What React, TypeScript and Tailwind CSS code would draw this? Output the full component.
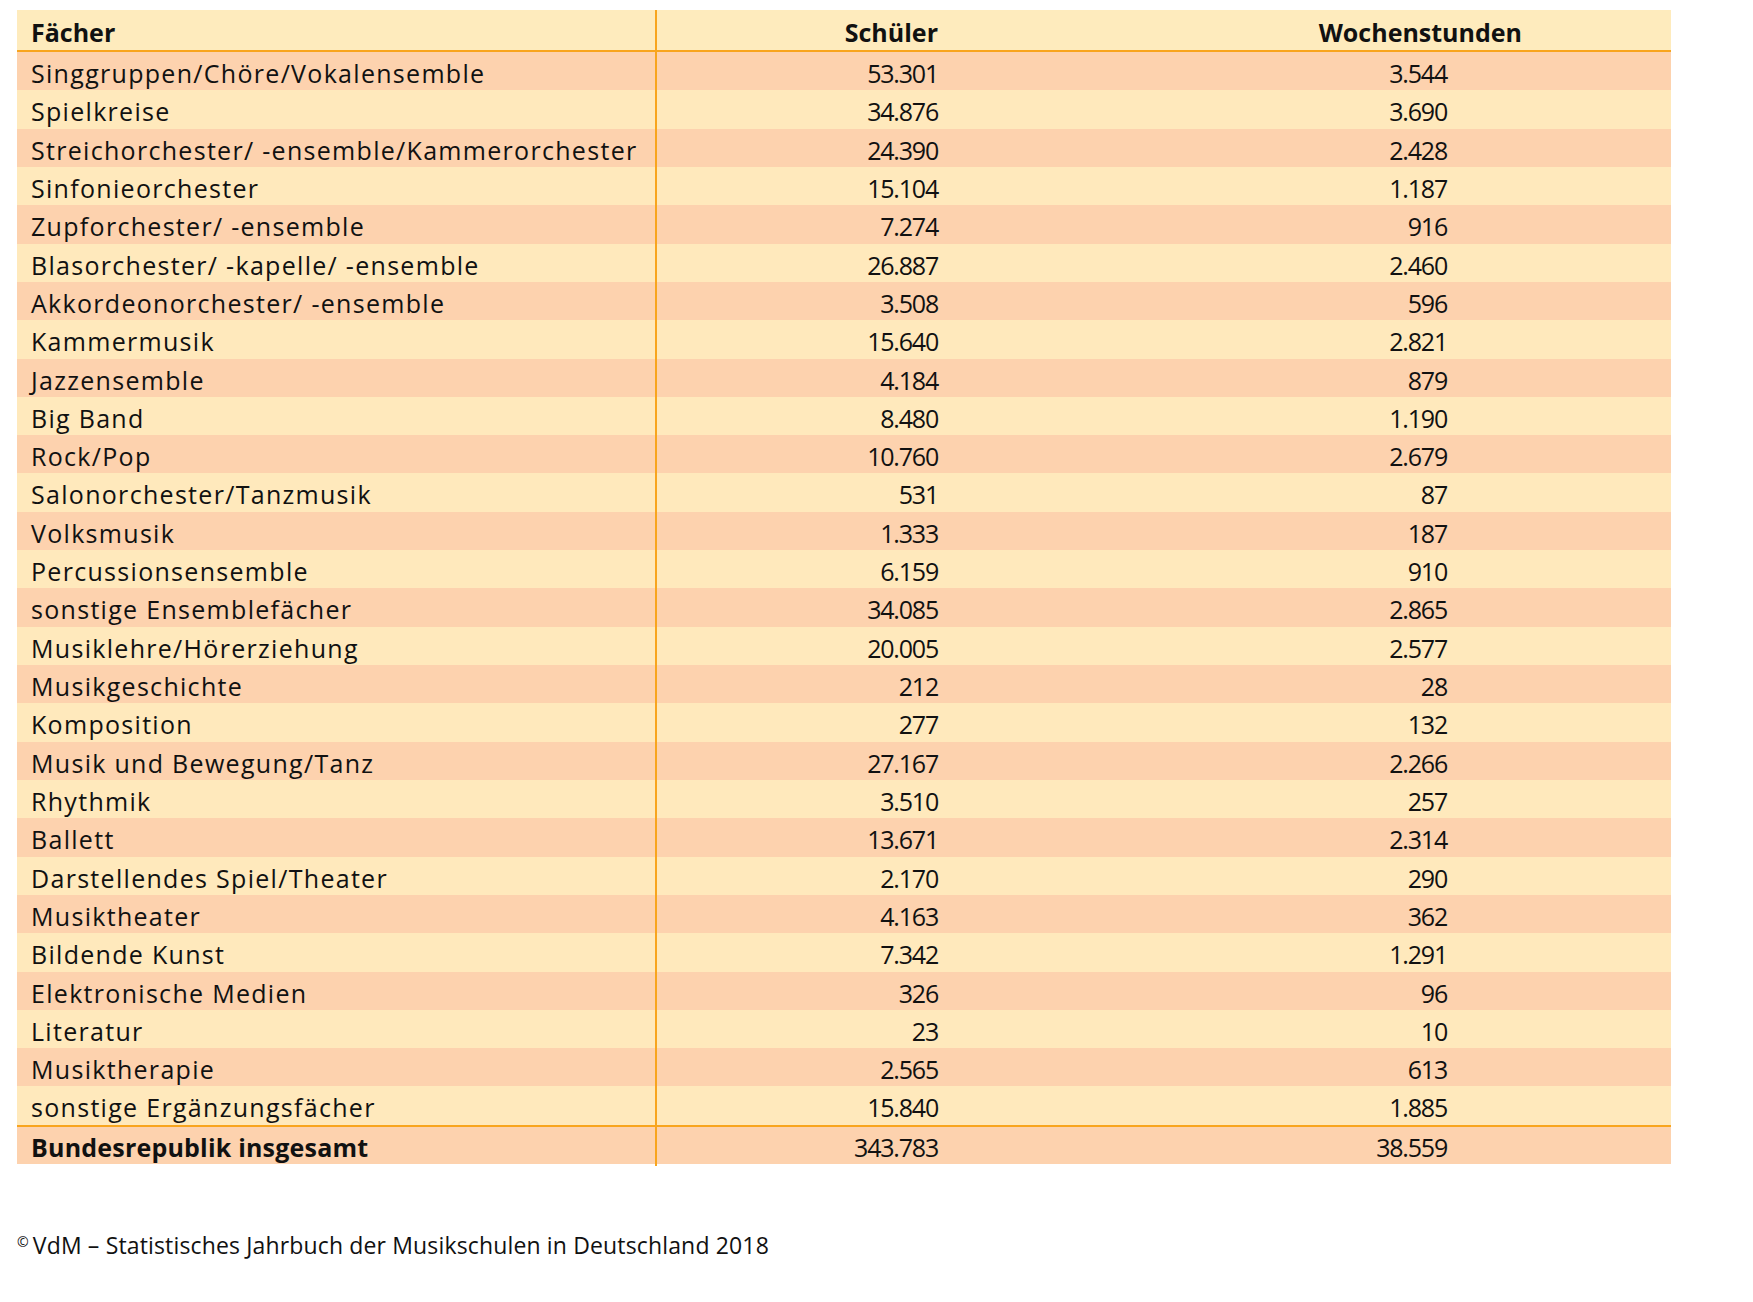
const rows: [string, string, string][] = [
  ["Singgruppen/Chöre/Vokalensemble", "53.301", "3.544"],
  ["Spielkreise", "34.876", "3.690"],
  ["Streichorchester/ -ensemble/Kammerorchester", "24.390", "2.428"],
  ["Sinfonieorchester", "15.104", "1.187"],
  ["Zupforchester/ -ensemble", "7.274", "916"],
  ["Blasorchester/ -kapelle/ -ensemble", "26.887", "2.460"],
  ["Akkordeonorchester/ -ensemble", "3.508", "596"],
  ["Kammermusik", "15.640", "2.821"],
  ["Jazzensemble", "4.184", "879"],
  ["Big Band", "8.480", "1.190"],
  ["Rock/Pop", "10.760", "2.679"],
  ["Salonorchester/Tanzmusik", "531", "87"],
  ["Volksmusik", "1.333", "187"],
  ["Percussionsensemble", "6.159", "910"],
  ["sonstige Ensemblefächer", "34.085", "2.865"],
  ["Musiklehre/Hörerziehung", "20.005", "2.577"],
  ["Musikgeschichte", "212", "28"],
  ["Komposition", "277", "132"],
  ["Musik und Bewegung/Tanz", "27.167", "2.266"],
  ["Rhythmik", "3.510", "257"],
  ["Ballett", "13.671", "2.314"],
  ["Darstellendes Spiel/Theater", "2.170", "290"],
  ["Musiktheater", "4.163", "362"],
  ["Bildende Kunst", "7.342", "1.291"],
  ["Elektronische Medien", "326", "96"],
  ["Literatur", "23", "10"],
  ["Musiktherapie", "2.565", "613"],
  ["sonstige Ergänzungsfächer", "15.840", "1.885"],
]

function Row({ label, a, b, shade }: { label: string; a: string; b: string; shade: boolean }) {
  return (
    <div className={`grid grid-cols-[640px_342px_1fr] h-[38.32px] pt-[3px] ${shade ? "bg-[#fdd2ae]" : "bg-[#ffe9bc]"}`}>
      <div className="flex items-center pl-[14px] text-[25px] tracking-[1.3px] border-r-2 border-[#f8a51e] -mt-[3px] pt-[3px]">{label}</div>
      <div className="flex items-center justify-end pr-[61px] text-[25px] tracking-[-1.2px]">{a}</div>
      <div className="flex items-center justify-end pr-[224px] text-[25px] tracking-[-1.2px]">{b}</div>
    </div>
  )
}

export default function App() {
  return (
    <div className="w-[1753px] h-[1302px] bg-white text-[#111] font-['Open_Sans',sans-serif] pt-[10px] pl-[17px]">
      <div className="w-[1654px]">
        <div className="grid grid-cols-[640px_342px_1fr] h-[40px] bg-[#feebbd] border-b-2 border-[#f8a51e] box-content font-bold text-[25px]">
          <div className="flex items-center pl-[14px] pt-[4px] border-r-2 border-[#f8a51e]">Fächer</div>
          <div className="flex items-center justify-end pt-[4px] pr-[61px]">Schüler</div>
          <div className="flex items-center justify-end pt-[4px] pr-[149px]">Wochenstunden</div>
        </div>
        {rows.map((r, i) => (
          <Row key={r[0]} label={r[0]} a={r[1]} b={r[2]} shade={i % 2 === 0} />
        ))}
        <div className="grid grid-cols-[640px_342px_1fr] h-[37px] bg-[#fdd2ae] border-t-2 border-[#f8a51e] box-content text-[25px]">
          <div className="flex items-center pl-[14px] pt-[2px] font-bold tracking-[0.2px] border-r-2 border-[#f8a51e]">Bundesrepublik insgesamt</div>
          <div className="flex items-center justify-end pt-[2px] pr-[61px] tracking-[-1.2px]">343.783</div>
          <div className="flex items-center justify-end pt-[2px] pr-[224px] tracking-[-1.2px]">38.559</div>
        </div>
      </div>
      <p className="mt-[64px] text-[23px] text-[#111] tracking-[0.15px]">
        <span className="text-[14px] align-[7px] mr-[4px]">©</span>VdM – Statistisches Jahrbuch der Musikschulen in Deutschland 2018
      </p>
    </div>
  )
}
